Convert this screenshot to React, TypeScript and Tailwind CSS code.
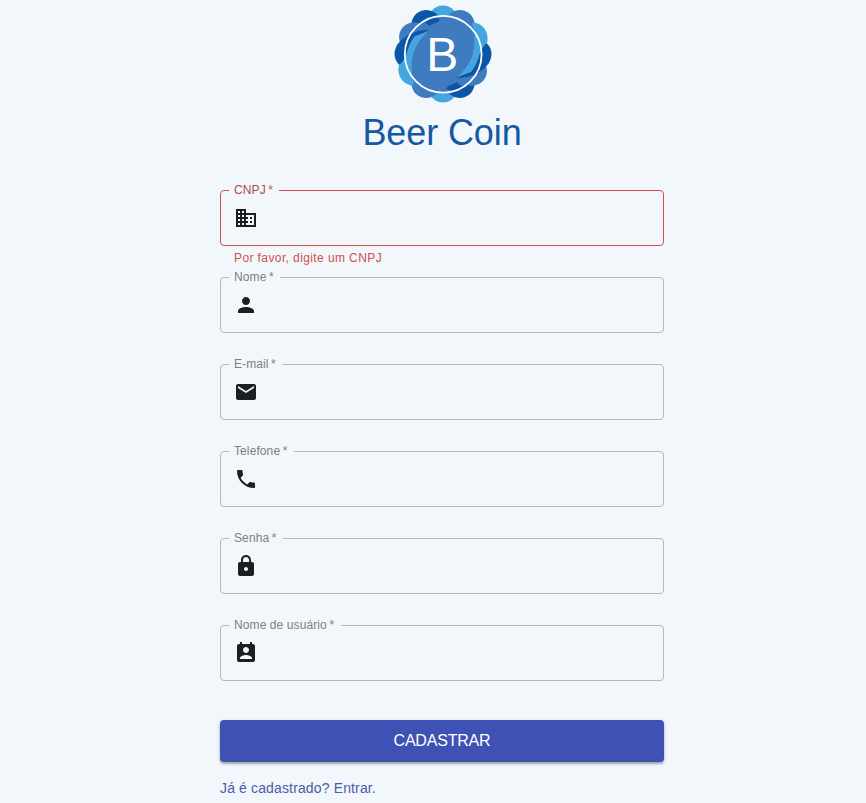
import React from "react";

type FieldProps = {
  label: string;
  icon: string;
  legendWidth: string;
  error?: string;
};

const fields: FieldProps[] = [
  {
    label: "CNPJ",
    legendWidth: "w-[50px]",
    error: "Por favor, digite um CNPJ",
    icon: "M12 7V3H2v18h20V7H12zM6 19H4v-2h2v2zm0-4H4v-2h2v2zm0-4H4V9h2v2zm0-4H4V5h2v2zm4 12H8v-2h2v2zm0-4H8v-2h2v2zm0-4H8V9h2v2zm0-4H8V5h2v2zm10 12h-8v-2h2v-2h-2v-2h2v-2h-2V9h8v10zm-2-8h-2v2h2v-2zm0 4h-2v2h2v-2z",
  },
  {
    label: "Nome",
    legendWidth: "w-[51px]",
    icon: "M12 12c2.21 0 4-1.79 4-4s-1.79-4-4-4-4 1.79-4 4 1.79 4 4 4zm0 2c-2.67 0-8 1.34-8 4v2h16v-2c0-2.66-5.33-4-8-4z",
  },
  {
    label: "E-mail",
    legendWidth: "w-[53px]",
    icon: "M20 4H4c-1.1 0-1.99.9-1.99 2L2 18c0 1.1.9 2 2 2h16c1.1 0 2-.9 2-2V6c0-1.1-.9-2-2-2zm0 4l-8 5-8-5V6l8 5 8-5v2z",
  },
  {
    label: "Telefone",
    legendWidth: "w-[65px]",
    icon: "M6.62 10.79c1.44 2.83 3.76 5.14 6.59 6.59l2.2-2.2c.27-.27.67-.36 1.02-.24 1.12.37 2.33.57 3.57.57.55 0 1 .45 1 1V20c0 .55-.45 1-1 1-9.39 0-17-7.61-17-17 0-.55.45-1 1-1h3.5c.55 0 1 .45 1 1 0 1.25.2 2.45.57 3.57.11.35.03.74-.25 1.02l-2.2 2.2z",
  },
  {
    label: "Senha",
    legendWidth: "w-[54px]",
    icon: "M18 8h-1V6c0-2.76-2.24-5-5-5S7 3.24 7 6v2H6c-1.1 0-2 .9-2 2v10c0 1.1.9 2 2 2h12c1.1 0 2-.9 2-2V10c0-1.1-.9-2-2-2zm-6 9c-1.1 0-2-.9-2-2s.9-2 2-2 2 .9 2 2-.9 2-2 2zm3.1-9H8.9V6c0-1.71 1.39-3.1 3.1-3.1 1.71 0 3.1 1.39 3.1 3.1v2z",
  },
  {
    label: "Nome de usuário",
    legendWidth: "w-[112px]",
    icon: "M19 3h-1V1h-2v2H8V1H6v2H5c-1.11 0-2 .9-2 2v14c0 1.1.89 2 2 2h14c1.1 0 2-.9 2-2V5c0-1.1-.9-2-2-2zm-7 3c1.66 0 3 1.34 3 3s-1.34 3-3 3-3-1.34-3-3 1.34-3 3-3zm6 12H6v-1c0-2 4-3.1 6-3.1s6 1.1 6 3.1v1z",
  },
];

const LIGHT = "#45a6df";
const MID = "#3f7bbf";
const DARK = "#0c56a8";
const petals = [
  { angle: 0, color: LIGHT },
  { angle: 180, color: LIGHT },
  { angle: 60, color: LIGHT },
  { angle: 240, color: LIGHT },
  { angle: 90, color: DARK },
  { angle: 270, color: DARK },
  { angle: 150, color: DARK },
  { angle: 330, color: DARK },
  { angle: 30, color: MID },
  { angle: 120, color: MID },
  { angle: 210, color: MID },
  { angle: 300, color: MID },
];

function Logo() {
  return (
    <svg className="ml-[2px] h-[98px] w-[98px]" viewBox="0 0 98 98" aria-hidden="true">
      {petals.map(({ angle, color }) => (
        <ellipse key={angle} cx="49" cy="17.5" rx="15.5" ry="17" fill={color} transform={`rotate(${angle} 49 49)`} />
      ))}
      <circle cx="49" cy="49" r="38.5" fill={MID} />
      {[0, 180].map((angle) => (
        <g key={angle} transform={`rotate(${angle} 49 49)`}>
          <path d="M19 16C28 9 36 11 46 14L44 17C41 18 38 19 35 21C32 17 28 15 19 16Z" fill={DARK} />
          <path d="M3 40C10 31 20 25 35 25C25 31 17 40 8 62L5 58C1 52 1 45 3 40Z" fill={DARK} />
          <path d="M34 26C30 28 26 29 21 31C16 37 14 44 12 50C10 55 8 58 5 60C3 67 6 76 14 79L20 80C16 65 17 49 23 40C26 34 31 30 34 26Z" fill={LIGHT} />
        </g>
      ))}
      <circle cx="49.2" cy="49.2" r="38.4" fill="none" stroke="#fff" strokeWidth="1.8" />
      <text x="48.2" y="66" textAnchor="middle" fill="#fff" fontSize="48" fontFamily="'Liberation Sans', Arial, sans-serif">
        B
      </text>
    </svg>
  );
}

function Field({ label, icon, legendWidth, error }: FieldProps) {
  return (
    <div className="h-[87px]">
      <fieldset className={`h-[61px] rounded-[4px] border px-2 ${error ? "border-[#d0504e]" : "border-[#b3b8ba]"}`}>
        <legend
          className={`h-[11px] whitespace-nowrap pl-[5px] text-[12px] leading-[11px] tracking-[0.1px] ${legendWidth} ${
            error ? "text-[#a94c50]" : "text-[#7b8083]"
          }`}
        >
          {label}
          <span className={error ? "text-[#d0504e]" : ""}>&thinsp;*</span>
        </legend>
        <svg className="ml-[5px] mt-[10px] h-6 w-6 fill-[#1b1f20]" viewBox="0 0 24 24" aria-hidden="true">
          <path d={icon} />
        </svg>
      </fieldset>
      {error && <p className="pl-[14px] pt-[3px] text-[12px] leading-[18px] tracking-[0.4px] text-[#d0504e]">{error}</p>}
    </div>
  );
}

export default function App() {
  return (
    <main className="flex h-[803px] w-full flex-col items-center overflow-hidden bg-[#f1f7fa] font-['Liberation_Sans',Arial,sans-serif]">
      <div className="ml-[18px] flex w-[444px] flex-col">
        <header className="flex h-[185px] flex-col items-center pt-[5px]">
          <Logo />
          <h1 className="mt-[10px] whitespace-nowrap text-[36px] leading-[40px] tracking-[-0.1px] text-[#1658a3]">Beer Coin</h1>
        </header>
        <form>
          {fields.map((field) => (
            <Field key={field.label} {...field} />
          ))}
          <button
            type="button"
            className="mt-[13px] block h-[42px] w-full rounded-[4px] bg-[#3f51b5] text-[16px] tracking-[-0.2px] text-white shadow-[0_2px_2px_rgba(0,0,0,0.25),0_1px_4px_rgba(0,0,0,0.15)]"
          >
            CADASTRAR
          </button>
        </form>
        <a className="mt-[16px] text-[14px] leading-[20px] tracking-[0.14px] text-[#4d5ca5]">Já é cadastrado? Entrar.</a>
      </div>
    </main>
  );
}
